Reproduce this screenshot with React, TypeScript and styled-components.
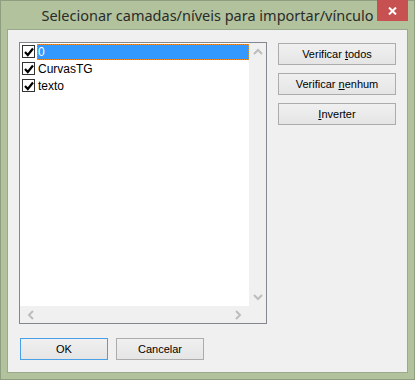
import React from "react";
import styled, { createGlobalStyle } from "styled-components";

const Global = createGlobalStyle`
  html, body { margin: 0; padding: 0; background: #b1c29c; }
  * { box-sizing: border-box; }
`;

const Window = styled.div`
  width: 415px;
  height: 380px;
  background: #b1c29c;
  border: 1px solid #8e9e80;
  display: flex;
  flex-direction: column;
  font-family: "Liberation Sans", Arial, sans-serif;
  font-size: 11px;
  color: #000;
  position: relative;
`;

const TitleBar = styled.div`
  height: 28px;
  display: flex;
  align-items: center;
  justify-content: center;
  font-family: "Noto Sans", "Open Sans", sans-serif;
  font-size: 14.5px;
  color: #2b2b2b;
`;

const CloseButton = styled.div`
  position: absolute;
  top: -1px;
  right: 6px;
  width: 31px;
  height: 21px;
  background: #c75050;
  display: flex;
  align-items: center;
  justify-content: center;
`;

const Panel = styled.div`
  margin: 0 6px 6px 6px;
  flex: 1;
  background: #f0f0f0;
  border: 1px solid #9aa88c;
  padding: 12px 0 0 11px;
  display: flex;
  flex-direction: column;
`;

const TopRow = styled.div`
  display: flex;
  gap: 11px;
`;

const ListBox = styled.div`
  width: 248px;
  height: 282px;
  border: 1px solid #828790;
  background: #fff;
  display: grid;
  grid-template-columns: 1fr 17px;
  grid-template-rows: 1fr 17px;
`;

const Items = styled.div`
  display: flex;
  flex-direction: column;
`;

const Item = styled.div`
  height: 17px;
  display: flex;
  align-items: center;
  padding-left: 2px;
  font-size: 12px;
`;

const Check = styled.span`
  width: 13px;
  height: 13px;
  border: 1px solid #333;
  background: #fff;
  display: flex;
  align-items: center;
  justify-content: center;
  flex: none;
`;

const Label = styled.span<{ $selected?: boolean }>`
  margin-left: 2px;
  flex: ${(p) => (p.$selected ? 1 : "none")};
  height: 16px;
  line-height: 14px;
  padding-left: 0px;
  background: ${(p) => (p.$selected ? "#3399ff" : "transparent")};
  color: ${(p) => (p.$selected ? "#fff" : "#000")};
  border: 1px dotted ${(p) => (p.$selected ? "#f08a24" : "transparent")};
`;

const ScrollV = styled.div`
  background: #f0f0f0;
  display: flex;
  flex-direction: column;
  justify-content: space-between;
  align-items: center;
  padding: 5px 0 5px;
`;

const ScrollH = styled.div`
  background: #f0f0f0;
  display: flex;
  justify-content: space-between;
  align-items: center;
  padding: 0 6px 0 6px;
`;

const Corner = styled.div`
  background: #f0f0f0;
`;

const ButtonCol = styled.div`
  display: flex;
  flex-direction: column;
  gap: 8px;
  margin-top: 1px;
`;

const Button = styled.button<{ $w: number; $default?: boolean }>`
  width: ${(p) => p.$w}px;
  height: 22px;
  margin: 0;
  padding: 0;
  font-family: "Liberation Sans", Arial, sans-serif;
  font-size: 11px;
  color: #000;
  background: linear-gradient(#f0f0f0, #e5e5e5);
  border: 1px solid ${(p) => (p.$default ? "#4aa0e6" : "#acacac")};
  border-radius: 0;
  display: flex;
  align-items: center;
  justify-content: center;
  u { text-decoration: underline; text-underline-offset: 1px; }
`;

const BottomRow = styled.div`
  display: flex;
  gap: 8px;
  margin-top: 14px;
  margin-left: 1px;
`;

const Chevron = ({ dir }: { dir: "up" | "down" | "left" | "right" }) => {
  const rot = { up: 0, down: 180, left: 270, right: 90 }[dir];
  return (
    <svg width="10" height="8" viewBox="0 0 10 8" style={{ transform: `rotate(${rot}deg)` }}>
      <path d="M1 6 L5 2 L9 6" fill="none" stroke="#bdbdbd" strokeWidth="2" />
    </svg>
  );
};

const CheckMark = () => (
  <svg width="10" height="10" viewBox="0 0 10 10">
    <path d="M1 5 L3.8 8 L9 1.5" fill="none" stroke="#000" strokeWidth="2.2" />
  </svg>
);

const items = ["0", "CurvasTG", "texto"];

export default function App() {
  return (
    <>
      <Global />
      <Window>
        <TitleBar>Selecionar camadas/níveis para importar/vínculo</TitleBar>
        <CloseButton>
          <svg width="9" height="8" viewBox="0 0 9 8">
            <path d="M1 0.5 L8 7.5 M8 0.5 L1 7.5" stroke="#fff" strokeWidth="2" />
          </svg>
        </CloseButton>
        <Panel>
          <TopRow>
            <ListBox>
              <Items>
                {items.map((t, i) => (
                  <Item key={t}>
                    <Check>
                      <CheckMark />
                    </Check>
                    <Label $selected={i === 0}>{t}</Label>
                  </Item>
                ))}
              </Items>
              <ScrollV>
                <Chevron dir="up" />
                <Chevron dir="down" />
              </ScrollV>
              <ScrollH>
                <Chevron dir="left" />
                <Chevron dir="right" />
              </ScrollH>
              <Corner />
            </ListBox>
            <ButtonCol>
              <Button $w={118}>
                Verificar&nbsp;<u>t</u>odos
              </Button>
              <Button $w={118}>
                Verificar&nbsp;<u>n</u>enhum
              </Button>
              <Button $w={118}>
                <u>I</u>nverter
              </Button>
            </ButtonCol>
          </TopRow>
          <BottomRow>
            <Button $w={88} $default>
              OK
            </Button>
            <Button $w={88}>Cancelar</Button>
          </BottomRow>
        </Panel>
      </Window>
    </>
  );
}
